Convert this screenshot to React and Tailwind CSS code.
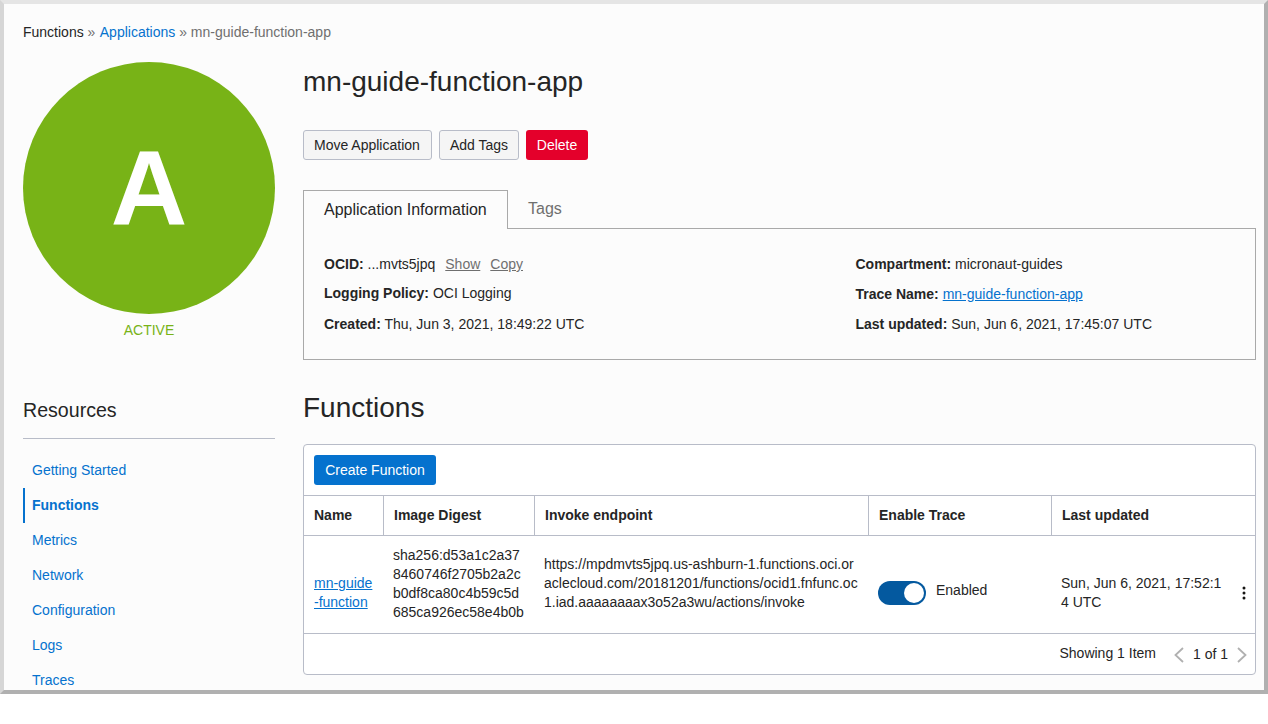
const navItems = ["Getting Started", "Functions", "Metrics", "Network", "Configuration", "Logs", "Traces"];

function InfoRow({ label, children, className = "" }) {
  return (
    <div className={`h-[30px] leading-[30px] ${className}`}>
      <span className="font-bold">{label}:</span> {children}
    </div>
  );
}

function Sidebar() {
  return (
    <aside className="w-[252px] shrink-0">
      <div className="w-[252px] h-[252px] rounded-full bg-[#78b317] flex items-center justify-center text-white font-bold text-[106px] leading-none">
        A
      </div>
      <div className="mt-[6px] text-center text-[#78b317] leading-[20px]">ACTIVE</div>
      <h3 className="mt-[58px] text-[19.6px] leading-[24px] pb-[16px] border-b border-[#b8bcc8]">Resources</h3>
      <nav className="mt-[14px]">
        {navItems.map((item) => (
          <a
            key={item}
            href="#"
            className={`block h-[35px] leading-[35px] text-[#0572ce] ${
              item === "Functions" ? "font-bold border-l-2 border-[#0572ce] pl-[7px]" : "pl-[9px]"
            }`}
          >
            {item}
          </a>
        ))}
      </nav>
    </aside>
  );
}

function InfoPanel() {
  return (
    <div>
      <div className="flex h-[39px] relative z-10">
        <div className="w-[205px] h-[39px] pl-[20px] border border-b-0 border-[#a9a9a9] bg-[#fcfcfc] text-[16px] leading-[38px]">
          Application Information
        </div>
        <div className="pl-[20px] text-[16px] leading-[37px] text-[#6f6f6f]">Tags</div>
      </div>
      <div className="-mt-px h-[132px] border border-[#a9a9a9] pl-[20px] pt-[20px] flex">
        <div className="w-[531.5px]">
          <InfoRow label="OCID">
            ...mvts5jpq
            <a href="#" className="ml-[10px] underline text-[#6f6f6f]">Show</a>
            <a href="#" className="ml-[10px] underline text-[#6f6f6f]">Copy</a>
          </InfoRow>
          <InfoRow label="Logging Policy" className="-mt-px">OCI Logging</InfoRow>
          <InfoRow label="Created" className="mt-px">Thu, Jun 3, 2021, 18:49:22 UTC</InfoRow>
        </div>
        <div>
          <InfoRow label="Compartment">micronaut-guides</InfoRow>
          <InfoRow label="Trace Name">
            <a href="#" className="underline text-[#0572ce]">mn-guide-function-app</a>
          </InfoRow>
          <InfoRow label="Last updated">Sun, Jun 6, 2021, 17:45:07 UTC</InfoRow>
        </div>
      </div>
    </div>
  );
}

function FunctionsTable() {
  const headCell = "h-[39px] px-[10px] font-bold leading-[38px] border-r border-[#b8bcc8]";
  return (
    <div className="h-[231px] border border-[#b8bcc8] rounded-[4px] bg-white">
      <div className="h-[51px] pl-[10px] pt-[10px] border-b border-[#b8bcc8]">
        <button className="w-[122px] h-[30px] rounded-[3px] bg-[#0572ce] text-white">Create Function</button>
      </div>
      <div className="grid grid-cols-[80px_151px_334px_183px_1fr] border-b border-[#b8bcc8]">
        <div className={headCell}>Name</div>
        <div className={headCell}>Image Digest</div>
        <div className={headCell}>Invoke endpoint</div>
        <div className={headCell}>Enable Trace</div>
        <div className="h-[39px] px-[10px] font-bold leading-[38px]">Last updated</div>
      </div>
      <div className="relative grid grid-cols-[80px_151px_334px_183px_1fr] h-[98px] pb-[2px] border-b border-[#b8bcc8] leading-[19px] items-center">
        <div className="pl-[10px] pt-[18px]">
          <a href="#" className="underline text-[#0572ce]">mn-guide<br />-function</a>
        </div>
        <div className="pl-[9px] pr-[10px] break-all">sha256:d53a1c2a378460746f2705b2a2cb0df8ca80c4b59c5d685ca926ec58e4b0b</div>
        <div className="pl-[9px] pr-[9px] break-all">
          https://mpdmvts5jpq.us-ashburn-1.functions.oci.oraclecloud.com/20181201/functions/ocid1.fnfunc.oc1.iad.aaaaaaaax3o52a3wu/actions/invoke
        </div>
        <div className="pl-[9px] pt-[18px] flex items-center gap-[10px]">
          <span className="w-[48px] h-[24px] rounded-full bg-[#04599f] flex items-center justify-end pr-[2px]">
            <span className="w-[20px] h-[20px] rounded-full bg-white"></span>
          </span>
          <span className="-mt-[4px]">Enabled</span>
        </div>
        <div className="pl-[9px] pr-[30px] pt-[18px] break-all">Sun, Jun 6, 2021, 17:52:14 UTC</div>
        <svg className="absolute right-[9px] top-[50px]" width="4" height="14" viewBox="0 0 4 14" fill="#161513">
          <circle cx="2" cy="2" r="1.5" />
          <circle cx="2" cy="7" r="1.5" />
          <circle cx="2" cy="12" r="1.5" />
        </svg>
      </div>
      <div className="h-[40px] flex items-center justify-end pr-[8px]">
        <span className="-mt-[2px] mr-[18px]">Showing 1 Item</span>
        <svg className="mt-[2px]" width="10" height="16" viewBox="0 0 10 16" fill="none" stroke="#b0b0b0" strokeWidth="1.8">
          <polyline points="9,1 1.5,8 9,15" />
        </svg>
        <span className="mx-[9px]">1 of 1</span>
        <svg className="mt-[2px]" width="10" height="16" viewBox="0 0 10 16" fill="none" stroke="#b0b0b0" strokeWidth="1.8">
          <polyline points="1,1 8.5,8 1,15" />
        </svg>
      </div>
    </div>
  );
}

export default function App() {
  return (
    <div className="h-[694px] overflow-hidden border-4 border-t-[#e5e5e5] border-l-[#d6d6d6] border-r-[#b0b0b0] border-b-[#b0b0b0] bg-[#fcfcfc] font-['Liberation_Sans',Arial,sans-serif] text-[14px] text-[#252525]">
      <div className="pl-[19px] pr-[8px]">
        <div className="h-[58px] pt-[18px] leading-[20px]">
          Functions <span className="text-[#6f6f6f]">»</span>{" "}
          <a href="#" className="ml-[0.5px] text-[#0572ce]">Applications</a>{" "}
          <span className="text-[#6f6f6f]">» mn-guide-function-app</span>
        </div>
        <div className="flex gap-[28px]">
          <Sidebar />
          <main className="flex-1 min-w-0">
            <h1 className="mt-[2px] text-[28px] leading-[36px]">mn-guide-function-app</h1>
            <div className="mt-[30px] flex gap-[7px]">
              <button className="w-[129px] h-[30px] pl-[10px] text-left rounded-[3px] border border-[#b8bcc8] bg-[#f5f5f5]">Move Application</button>
              <button className="w-[80px] h-[30px] rounded-[3px] border border-[#b8bcc8] bg-[#f5f5f5]">Add Tags</button>
              <button className="w-[62px] h-[30px] rounded-[3px] bg-[#e4002b] text-white">Delete</button>
            </div>
            <div className="mt-[30px]">
              <InfoPanel />
            </div>
            <h2 className="mt-[30px] text-[28px] leading-[36px]">Functions</h2>
            <div className="mt-[18px]">
              <FunctionsTable />
            </div>
          </main>
        </div>
      </div>
    </div>
  );
}
